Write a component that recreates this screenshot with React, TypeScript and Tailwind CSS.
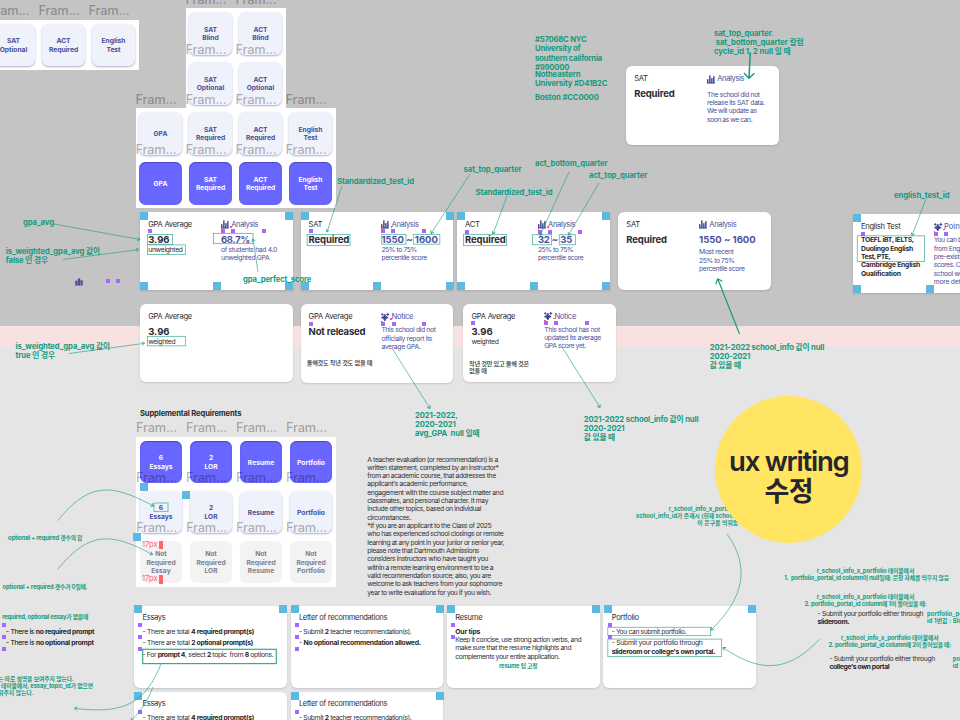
import { Fragment, useLayoutEffect, useRef } from "react";
import type { ReactNode } from "react";

/** Turns **bold** spans of a string into <b> elements. */
function rich(line: string): ReactNode {
  return line.split("**").map((part, i) =>
    i % 2 ? (
      <b key={i} className="font-bold text-[#26262c]">
        {part}
      </b>
    ) : (
      <Fragment key={i}>{part}</Fragment>
    ),
  );
}

/** Lines of text, tracked so that the widest line takes `w` canvas pixels. */
function Fit({ lines, w, className = "" }: { lines: string[]; w?: number; className?: string }) {
  const ref = useRef<HTMLDivElement>(null);
  useLayoutEffect(() => {
    const el = ref.current;
    if (!el || !w) return;
    el.style.letterSpacing = "0px";
    let widest = 0;
    let count = 1;
    el.querySelectorAll<HTMLElement>("[data-line]").forEach((n) => {
      const width = n.getBoundingClientRect().width;
      if (width > widest) {
        widest = width;
        count = (n.textContent || " ").length;
      }
    });
    el.style.letterSpacing = `${(w - widest) / count}px`;
  }, [w, lines]);
  return (
    <div ref={ref} className={`whitespace-pre ${className}`}>
      {lines.map((l, i) => (
        <div key={i}>
          <span data-line="">{rich(l)}</span>
        </div>
      ))}
    </div>
  );
}

/** A node of the canvas. */
function Node({ x, y, className = "", children }: { x: number; y: number; className?: string; children?: ReactNode }) {
  return (
    <div className={`absolute ${className}`} style={{ left: x, top: y }}>
      {children}
    </div>
  );
}

type NoteProps = { x: number; y: number; w?: number; lines: string[] };

/** Green annotation; y is the middle of its first line. */
function Note({ x, y, w, lines }: NoteProps) {
  return (
    <Node x={x} y={y - 4.4}>
      <Fit lines={lines} w={w} className="text-[7.7px] leading-[9.3px] font-bold text-[#149b80]" />
    </Node>
  );
}

function SmallNote({ x, y, w, lines }: NoteProps) {
  return (
    <Node x={x} y={y - 3.5}>
      <Fit lines={lines} w={w} className="text-[5.8px] leading-[7px] font-bold text-[#149b80]" />
    </Node>
  );
}

function Body({ x, y, w, lines }: NoteProps) {
  return (
    <Node x={x} y={y - 3.7}>
      <Fit lines={lines} w={w} className="text-[6.8px] leading-[8.33px] text-[#303036]" />
    </Node>
  );
}

/* ---------- requirement tiles ---------- */

const tileTone = {
  light: "bg-[#f0f2fb] text-[#454d96] shadow-[0_1px_2px_rgba(70,75,150,0.45)]",
  solid: "bg-[#6965ff] text-white shadow-[inset_0_1px_1px_rgba(40,40,140,0.5)]",
  muted: "bg-[#f3f3f3] text-[#7d7e8c]",
};

type TileSpec = { tone: keyof typeof tileTone; lines: string[] };

function Tile({ tone, lines }: TileSpec) {
  return (
    <div className="relative flex h-[50px] w-[50px] items-center justify-center">
      <div
        className={`flex h-[42.6px] w-[42.6px] flex-col items-center justify-center rounded-[6.5px] pt-[1.4px] text-[6.7px] leading-[8.33px] font-bold ${tileTone[tone]}`}
      >
        {lines.map((l) => (
          <span key={l}>{l}</span>
        ))}
      </div>
      <div className="absolute -top-[16.8px] left-0">
        <Fit lines={["Fram..."]} w={41} className="text-[12.8px] leading-[16px] font-medium text-black/30" />
      </div>
    </div>
  );
}

function TilePanel({ cols, tiles }: { cols: string; tiles: TileSpec[] }) {
  return (
    <div className={`grid bg-white ${cols}`}>
      {tiles.map((t, i) => (
        <Tile key={i} {...t} />
      ))}
    </div>
  );
}

/* ---------- icons ---------- */

function Bars() {
  return (
    <svg viewBox="0 0 8 9" className="h-[9px] w-[8px] shrink-0" fill="#454d96">
      <rect x="0" y="4.2" width="1.5" height="4.2" />
      <rect x="2.1" y="0.4" width="1.5" height="8" />
      <rect x="4.1" y="3.2" width="1.5" height="5.2" />
      <rect x="6.1" y="1.2" width="1.5" height="7.2" />
      <rect x="0" y="7.4" width="7.6" height="1" />
    </svg>
  );
}

function Sparkle() {
  return (
    <svg viewBox="0 0 8 9" className="h-[9px] w-[8px] shrink-0 overflow-visible" fill="#3d4592" stroke="#3d4592">
      <path d="M3.8 1.2 Q4.3 4 7.2 4.6 Q4.3 5.2 3.8 8 Q3.3 5.2 0.4 4.6 Q3.3 4 3.8 1.2Z" strokeWidth="0.9" />
      <path d="M1.3 0 Q1.5 1.2 2.6 1.4 Q1.5 1.6 1.3 2.8 Q1.1 1.6 0 1.4 Q1.1 1.2 1.3 0Z" strokeWidth="0.3" />
      <path d="M6.8 -0.2 Q7 1.2 8.4 1.4 Q7 1.6 6.8 3 Q6.6 1.6 5.2 1.4 Q6.6 1.2 6.8 -0.2Z" strokeWidth="0.3" />
    </svg>
  );
}

/* ---------- score cards ---------- */

type Line = { t: string; w?: number; k: keyof typeof lineKind };

const lineKind = {
  title: "h-[10px] text-[7.6px] leading-[10px]",
  value: "mt-[3px] h-[13.2px] text-[9.5px] leading-[14px] font-bold",
  small: "h-[8.33px] text-[6.8px] leading-[8.33px]",
  gap: "h-[4px]",
  hair: "h-[2.4px]",
  bold: "h-[8.33px] text-[6.8px] leading-[8.33px] font-bold",
};

type CardSpec = {
  x: number;
  y: number;
  square?: boolean;
  icon?: "bars" | "sparkle";
  heading?: string;
  headingW?: number;
  spaced?: boolean;
  left: Line[];
  right?: Line[];
};

function Lines({ items }: { items: Line[] }) {
  return (
    <>
      {items.map((l, i) => (
        <Fit key={i} lines={[l.t]} w={l.w} className={lineKind[l.k]} />
      ))}
    </>
  );
}

function ScoreCard({ x, y, square, icon, heading, headingW, left, right }: CardSpec) {
  return (
    <Node
      x={x}
      y={y}
      className={`flex h-[78.5px] w-[152.7px] bg-white pt-[8px] pl-[8px] shadow-[0_1px_2px_rgba(60,60,90,0.18)] ${square ? "rounded-none" : "rounded-[6px]"}`}
    >
      <div className="w-[72.8px] shrink-0 text-[#2b2b31]">
        <Lines items={left} />
      </div>
      {right && (
        <div className="text-[#4a529c]">
          <div className="flex h-[10px] items-center gap-[2.2px]">
            {icon === "sparkle" ? <Sparkle /> : <Bars />}
            <Fit lines={[heading || "Analysis"]} w={headingW || 27} className="text-[7.6px] leading-[10px]" />
          </div>
          <Lines items={right} />
        </div>
      )}
    </Node>
  );
}

const cards: CardSpec[] = [
  {
    x: 140.2, y: 211.8, square: true,
    left: [{ t: "GPA Average", w: 43.8, k: "title" }, { t: "3.96", w: 21.3, k: "value" }, { t: "unweighted", w: 34.5, k: "small" }],
    right: [{ t: "68.7%", w: 28.8, k: "value" }, { t: "of students had 4.0", w: 56, k: "small" }, { t: "unweighted GPA", w: 48.3, k: "small" }],
  },
  {
    x: 300.6, y: 211.8, square: true,
    left: [{ t: "SAT", w: 13.5, k: "title" }, { t: "Required", w: 40.5, k: "value" }],
    right: [{ t: "1550 ~ 1600", w: 56.5, k: "value" }, { t: "25% to 75%", w: 35.3, k: "small" }, { t: "percentile score", w: 45.5, k: "small" }],
  },
  {
    x: 457.1, y: 211.8, square: true,
    left: [{ t: "ACT", w: 14.6, k: "title" }, { t: "Required", w: 40.5, k: "value" }],
    right: [{ t: "32 ~ 35", w: 34.2, k: "value" }, { t: "25% to 75%", w: 35.3, k: "small" }, { t: "percentile score", w: 45.5, k: "small" }],
  },
  {
    x: 618.3, y: 211.8,
    left: [{ t: "SAT", w: 13.5, k: "title" }, { t: "Required", w: 40.5, k: "value" }],
    right: [{ t: "1550 ~ 1600", w: 56.5, k: "value" }, { t: "", k: "hair" }, { t: "Most recent", w: 34.5, k: "small" }, { t: "25% to 75%", w: 35.3, k: "small" }, { t: "percentile score", w: 45.5, k: "small" }],
  },
  {
    x: 626.2, y: 66.2,
    left: [{ t: "SAT", w: 13.5, k: "title" }, { t: "Required", w: 40.5, k: "value" }],
    right: [{ t: "", k: "gap" }, { t: "", k: "hair" }, { t: "The school did not", w: 52.7, k: "small" }, { t: "release its SAT data.", w: 57.5, k: "small" }, { t: "We will update as", w: 49.7, k: "small" }, { t: "soon as we can.", w: 45.2, k: "small" }],
  },
  {
    x: 140.2, y: 303.5,
    left: [{ t: "GPA Average", w: 43.8, k: "title" }, { t: "3.96", w: 21.3, k: "value" }, { t: "weighted", w: 27.2, k: "small" }],
  },
  {
    x: 300.6, y: 304.2, icon: "sparkle", heading: "Notice", headingW: 21.7,
    left: [{ t: "GPA Average", w: 43.8, k: "title" }, { t: "Not released", w: 56.8, k: "value" }],
    right: [{ t: "", k: "gap" }, { t: "This school did not", w: 54.2, k: "small" }, { t: "officially report its", w: 50.7, k: "small" }, { t: "average GPA.", w: 39, k: "small" }],
  },
  {
    x: 463.4, y: 303.5, icon: "sparkle", heading: "Notice", headingW: 21.7,
    left: [{ t: "GPA Average", w: 43.8, k: "title" }, { t: "3.96", w: 21.3, k: "value" }, { t: "weighted", w: 27.2, k: "small" }],
    right: [{ t: "", k: "gap" }, { t: "This school has not", w: 55.7, k: "small" }, { t: "updated its average", w: 56.7, k: "small" }, { t: "GPA score yet.", w: 41.7, k: "small" }],
  },
  {
    x: 853, y: 214.3, square: true, icon: "sparkle", heading: "Pointers", headingW: 29.5,
    left: [
      { t: "English Test", w: 39.3, k: "title" }, { t: "", k: "gap" }, { t: "TOEFL iBT, IELTS,", w: 52.8, k: "bold" }, { t: "Duolingo English", w: 52, k: "bold" },
      { t: "Test, PTE,", w: 29.5, k: "bold" }, { t: "Cambridge English", w: 59, k: "bold" }, { t: "Qualification", w: 39.7, k: "bold" },
    ],
    right: [
      { t: "", k: "gap" }, { t: "You can be exempt", w: 54, k: "small" }, { t: "from English with", w: 49, k: "small" }, { t: "pre-existing SAT", w: 48, k: "small" },
      { t: "scores. Check the", w: 51, k: "small" }, { t: "school website for", w: 52, k: "small" }, { t: "more details.", w: 38, k: "small" },
    ],
  },
];

/* ---------- supplemental cards ---------- */

type Item = { lines: string[]; w: number };

function InfoCard({ title, titleW, children }: { title: string; titleW: number; children: ReactNode }) {
  return (
    <section className="flex h-[82.5px] flex-col rounded-[6px] bg-white pt-[7.7px] pl-[8.2px] text-[#303036] shadow-[0_1px_2px_rgba(60,60,90,0.2)]">
      <Fit lines={[title]} w={titleW} className="mb-[4.4px] h-[10px] text-[7.6px] leading-[10px]" />
      {children}
    </section>
  );
}

function Items({ items }: { items: Item[] }) {
  return (
    <div className="flex flex-col gap-[3.4px]">
      {items.map((it, i) => (
        <Fit key={i} lines={it.lines} w={it.w} className="text-[6.8px] leading-[8.33px]" />
      ))}
    </div>
  );
}

const essayItems: Item[] = [
  { lines: ["- There are total **4 required prompt(s)**"], w: 111.5 },
  { lines: ["- There are total **2 optional prompt(s)**"], w: 110.5 },
  { lines: ["- For **prompt 4**, select **2** topic  from **8** options."], w: 130.7 },
];

const lorItems: Item[] = [
  { lines: ["- Submit **2** teacher recommendation(s)."], w: 112.5 },
  { lines: ["- **No optional recommendation allowed.**"], w: 121.9 },
];

/* ---------- markers ---------- */

const handles: [number, number][] = [
  [140.3, 211.8], [285, 211.8], [140.3, 282.3], [213, 282.3], [285, 282.3],
  [300.7, 211.8], [445.5, 211.8], [300.7, 282.3], [373.2, 282.3], [445.5, 282.3],
  [457.3, 211.8], [602, 211.8], [457.3, 282.3], [529.8, 282.3], [602, 282.3],
  [853, 214.2], [853, 285], [926, 285],
  [139.8, 482.8], [182, 490.8], [132.5, 532.8],
  [134.3, 605.2], [279, 605.2], [290.8, 605.2], [435.5, 605.2], [447.3, 605.2], [591.8, 605.2], [603.8, 605.2], [748.3, 605.2],
  [134.3, 691.7], [290.8, 691.7], [435.5, 691.7],
];

const dots: [number, number][] = [
  [148.2, 229.2], [220.8, 229.2], [231, 229.2], [261.7, 229.2],
  [308.6, 229.2], [381, 229.2], [391.3, 229.2], [421.8, 229.2],
  [465, 229.5], [537.6, 229.5], [547.8, 229.5], [578.2, 229.5],
  [308.6, 321.7], [381, 321.7], [391.5, 321.7], [421.8, 321.7],
  [471.3, 321], [544, 321], [554.3, 321], [584.5, 321],
  [861, 231.8], [933.8, 231.8], [944, 231.8],
  [106, 279.4], [116.3, 279.4],
  [138.3, 623], [138.3, 634.8], [138.3, 646.6], [138.3, 709.5],
  [294.8, 623], [294.8, 634.8], [294.8, 646.6], [294.8, 709.5],
  [451.3, 623], [451.3, 634.8], [607.8, 623], [607.8, 634.8],
  [2, 623], [2, 634.8], [2, 646.6],
];

const specks: [number, number][] = [
  [230, 226], [390.5, 226], [547, 226], [390, 318], [553, 317.5], [943, 228.5],
  [220.8, 227.8], [381, 227.8], [537.5, 228], [380.8, 320.5], [543.8, 320], [933.5, 230.5],
];

/* left, top, right, bottom */
const outlines: number[][] = [
  [147.5, 234.5, 172.5, 244.3], [147.5, 244.9, 185.4, 254.5], [213.4, 233.4, 253, 243.6],
  [307.2, 234.4, 350, 245.6], [381.8, 234.4, 406, 244.2], [413.3, 234.4, 439.8, 244.2],
  [463.5, 234.4, 506.6, 245.6], [532.5, 234.7, 551.6, 244.7], [559.3, 234.7, 575.4, 244.7],
  [147.5, 336.4, 185.4, 345.8], [857.3, 235.8, 924.5, 261.6], [154, 503, 168, 511.6],
  [607.8, 627.3, 710.6, 635.6], [607.8, 639.1, 721.6, 656.6],
];

const connectors = [
  "M54 224 L140 239.5", "M63 259.5 L138.5 249.6", "M69 353.5 L144.5 343.3",
  "M342 186 L327 232", "M470 174 L431 233.5", "M507 196 L493 234", "M569 172 L540 235.5", "M599 183 L568.5 235",
  "M258 272 L253 239", "M392.5 349 L430 408.5", "M562 347 L600 407.5", "M926 199 L912 235.5",
  "M727 534 C750 566 745 597 711 630", "M819.5 639.3 C785 676 756 670 723 647.5",
  "M57.8 520.6 C90 481 112 484 153.5 506", "M57.8 569.2 C90 530 112 533 152.5 554.5",
  "M161 664 C146 701 127 715 74.5 708.3", "M153 687 Q146 706 131 721",
];

const optReq = ["r_school_info_x_portfolio 테이블에서"];

export default function App() {
  return (
    <div className="relative h-[720px] w-[960px] overflow-hidden bg-[#e5e5e5] font-['Inter','Noto_Sans_CJK_KR',sans-serif] [font-optical-sizing:none]">
      <div className="h-[325.7px] bg-[#c4c4c4]" />
      <div className="h-[21.5px] bg-[#f8e1e1]" />

      <Node x={-11.5} y={20}>
        <TilePanel
          cols="grid-cols-[50px_50px_50px]"
          tiles={[
            { tone: "light", lines: ["SAT", "Optional"] }, { tone: "light", lines: ["ACT", "Required"] }, { tone: "light", lines: ["English", "Test"] },
          ]}
        />
      </Node>
      <Node x={135.5} y={8.3} className="flex flex-col items-center">
        <TilePanel
          cols="grid-cols-[50px_50px]"
          tiles={[
            { tone: "light", lines: ["SAT", "Blind"] }, { tone: "light", lines: ["ACT", "Blind"] },
            { tone: "light", lines: ["SAT", "Optional"] }, { tone: "light", lines: ["ACT", "Optional"] },
          ]}
        />
        <TilePanel
          cols="grid-cols-[50px_50px_50px_50px]"
          tiles={[
            { tone: "light", lines: ["GPA"] }, { tone: "light", lines: ["SAT", "Required"] }, { tone: "light", lines: ["ACT", "Required"] }, { tone: "light", lines: ["English", "Test"] },
            { tone: "solid", lines: ["GPA"] }, { tone: "solid", lines: ["SAT", "Required"] }, { tone: "solid", lines: ["ACT", "Required"] }, { tone: "solid", lines: ["English", "Test"] },
          ]}
        />
      </Node>
      <Node x={136} y={408.6} className="flex flex-col gap-[18.4px]">
        <Fit lines={["Supplemental Requirements"]} w={101.3} className="pl-1 text-[7.6px] leading-[10px] font-bold text-[#2b2b31]" />
        <TilePanel
          cols="grid-cols-[50px_50px_50px_50px]"
          tiles={[
            { tone: "solid", lines: ["6", "Essays"] }, { tone: "solid", lines: ["2", "LOR"] }, { tone: "solid", lines: ["Resume"] }, { tone: "solid", lines: ["Portfolio"] },
            { tone: "light", lines: ["6", "Essays"] }, { tone: "light", lines: ["2", "LOR"] }, { tone: "light", lines: ["Resume"] }, { tone: "light", lines: ["Portfolio"] },
            { tone: "muted", lines: ["Not", "Required", "Essay"] }, { tone: "muted", lines: ["Not", "Required", "LOR"] },
            { tone: "muted", lines: ["Not", "Required", "Resume"] }, { tone: "muted", lines: ["Not", "Required", "Portfolio"] },
          ]}
        />
      </Node>
      <Node x={142} y={540.5} className="flex flex-col gap-[26px]">
        {["top", "bottom"].map((side) => (
          <div key={side} className="flex items-center gap-[1.5px]">
            <Fit lines={["17px"]} w={15.5} className="text-[7.6px] leading-[8.6px] text-[#ff6466]" />
            <div className="h-[8.6px] w-[4px] bg-[#ff6466]" />
          </div>
        ))}
      </Node>

      {cards.map((c, i) => (
        <ScoreCard key={i} {...c} />
      ))}
      <Node x={306.7} y={358.5}>
        <Fit lines={["올해것도 작년 것도 없을 때"]} w={65.5} className="text-[6.2px] leading-[7px] font-medium text-[#2b2b31]" />
      </Node>
      <Node x={469} y={359.5}>
        <Fit lines={["작년 것만 있고 올해 것은", "없을 때"]} w={60} className="text-[6.2px] leading-[7px] font-medium text-[#2b2b31]" />
      </Node>

      <Node x={134.3} y={605.5} className="grid grid-cols-[152.8px_152.8px_152.8px_152.8px] gap-x-[3.6px] gap-y-[3.8px]">
        <InfoCard title="Essays" titleW={23}>
          <Items items={essayItems} />
        </InfoCard>
        <InfoCard title="Letter of recommendations" titleW={88.3}>
          <Items items={lorItems} />
        </InfoCard>
        <InfoCard title="Resume" titleW={27}>
          <Fit lines={["**Our tips**"]} w={25} className="text-[6.8px] leading-[8.33px]" />
          <Fit
            lines={["Keep it concise, use strong action verbs, and", "make sure that the resume highlights and", "complements your entire application."]}
            w={126} className="text-[6.8px] leading-[8.33px]"
          />
        </InfoCard>
        <InfoCard title="Portfolio" titleW={27}>
          <Items
            items={[
              { lines: ["- You can submit portfolio."], w: 74.3 },
              { lines: ["- Submit your portfolio through", "**slideroom or college's own portal.**"], w: 103.5 },
            ]}
          />
        </InfoCard>
        <InfoCard title="Essays" titleW={23}>
          <Items items={essayItems} />
        </InfoCard>
        <InfoCard title="Letter of recommendations" titleW={88.3}>
          <Items items={lorItems} />
        </InfoCard>
      </Node>

      <Body
        x={367.3} y={459.2} w={136.7}
        lines={[
          "A teacher evaluation (or recommendation) is a", "written statement, completed by an instructor*", "from an academic course, that addresses the",
          "applicant's academic performance,", "engagement with the course subject matter and", "classmates, and personal character. It may",
          "include other topics, based on individual", "circumstances.", "*If you are an applicant to the Class of 2025",
          "who has experienced school closings or remote", "learning at any point in your junior or senior year,", "please note that Dartmouth Admissions",
          "considers instructors who have taught you", "within a remote learning environment to be a", "valid recommendation source; also, you are",
          "welcome to ask teachers from your sophomore", "year to write evaluations for you if you wish.",
        ]}
      />
      <Node x={6} y={627.6} className="flex flex-col">
        <Items items={[{ lines: ["- There is **no required prompt**"], w: 88.3 }, { lines: ["- There is **no optional prompt**"], w: 87.7 }]} />
      </Node>
      <Body x={817.6} y={613.4} w={105.5} lines={["- Submit your portfolio either through", "**slideroom.**"]} />
      <Body x={829.4} y={658.7} w={105.5} lines={["- Submit your portfolio either through", "**college's own portal**"]} />

      <svg viewBox="0 0 8 8" className="absolute top-[277.5px] left-[74.5px] h-[8px] w-[8px]" fill="#4a509c">
        <rect x="0.2" y="2.8" width="2.3" height="4.8" />
        <rect x="2.8" y="0.4" width="2.4" height="7.2" />
        <rect x="5.5" y="2.2" width="2.2" height="5.4" />
      </svg>

      {handles.map(([x, y], i) => (
        <Node key={i} x={x} y={y} className="h-[8px] w-[8px] bg-[#5bb9e2]" />
      ))}
      {dots.map(([x, y], i) => (
        <Node key={i} x={x} y={y} className="h-[4px] w-[4px] bg-[#a966ff]" />
      ))}
      {specks.map(([x, y], i) => (
        <Node key={i} x={x} y={y} className="h-[1.6px] w-[1.8px] bg-[#ff5a66]" />
      ))}

      <Note x={23} y={222.2} w={31} lines={["gpa_avg"]} />
      <Note x={5.7} y={251} w={94.3} lines={["is_weighted_gpa_avg 값이", "false 인 경우"]} />
      <Note x={15.5} y={346.4} w={94.5} lines={["is_weighted_gpa_avg 값이", "true 인 경우"]} />
      <Note x={243} y={279} w={68.3} lines={["gpa_perfect_score"]} />
      <Note x={337} y={181} w={77} lines={["Standardized_test_id"]} />
      <Note x={463.5} y={169.2} w={58} lines={["sat_top_quarter"]} />
      <Note x={475.5} y={192.6} w={77} lines={["Standardized_test_id"]} />
      <Note x={535} y={163.7} w={72.5} lines={["act_bottom_quarter"]} />
      <Note x={589} y={175} w={58.3} lines={["act_top_quarter"]} />
      <Note x={535} y={39.6} w={67} lines={["#57068C NYC", "University of", "southern california", "#990000"]} />
      <Note x={535} y={74} w={72.3} lines={["Notheastern", "University #D41B2C"]} />
      <Note x={535} y={97} w={63.7} lines={["Boston #CC0000"]} />
      <Note x={714} y={33} w={89.5} lines={["sat_top_quarter.", " sat_bottom_quarter 칼럼", "cycle_id 1, 2 null 일 때"]} />
      <Note x={894} y={195} w={55.5} lines={["english_test_id"]} />
      <Note x={709.7} y={347} w={114.6} lines={["2021-2022 school_info 값이 null", "2020-2021", "값 있을 때"]} />
      <Note x={583.8} y={419} w={114.6} lines={["2021-2022 school_info 값이 null", "2020-2021", "값 있을 때"]} />
      <Note x={415} y={415} w={64.5} lines={["2021-2022,", "2020-2021", "avg_GPA  null 일때"]} />

      <SmallNote x={668.7} y={508.3} w={97.5} lines={optReq} />
      <SmallNote x={636} y={515.2} w={163} lines={["school_info_id가 존재시 (현재 school_info_id가 없을때는 비움)"]} />
      <SmallNote x={697.3} y={522.1} w={41} lines={["이 문구를 띄워줌"]} />
      <SmallNote x={816.7} y={570.6} w={97.5} lines={optReq} />
      <SmallNote x={784.3} y={577.6} w={164.7} lines={["1.  portfolio_portal_id column이 null일때: 문장 자체를 띄우지 않음"]} />
      <SmallNote x={816.7} y={596.6} w={97.5} lines={optReq} />
      <SmallNote x={804.5} y={603.6} w={122} lines={["2. portfolio_portal_id column에 1이 들어있을 때:"]} />
      <SmallNote x={841} y={637.8} w={97.5} lines={optReq} />
      <SmallNote x={828.6} y={644.8} w={122.5} lines={["2. portfolio_portal_id column에 2이 들어있을 때:"]} />
      <SmallNote x={927} y={613.4} w={49} lines={["portfolio_portal_", "id 1번값 : Slide"]} />
      <SmallNote x={952.7} y={658.8} w={49} lines={["portfolio_portal_", "id 2번값"]} />
      <SmallNote x={499} y={665.1} w={38.5} lines={["resume 팁 고정"]} />
      <SmallNote x={8} y={537.2} w={74.3} lines={["optional + required 갯수의 합"]} />
      <SmallNote x={2.6} y={586.2} w={85} lines={["optional + required 갯수가 0일때."]} />
      <SmallNote x={2.2} y={616.2} w={86} lines={["required, optional essay가 없을때"]} />
      <SmallNote x={-2} y={678.6} w={76} lines={["는 따로 설명을 보여주지 않는다."]} />
      <SmallNote x={1} y={685.6} w={92} lines={["테이블에서, essay_topic_id가 없으면"]} />
      <SmallNote x={-2} y={692.4} w={36} lines={["워주지 않는다."]} />

      <svg viewBox="0 0 960 720" className="absolute inset-0 h-[720px] w-[960px]" fill="none" stroke="#149b80">
        <defs>
          <marker id="tip" viewBox="0 0 6 6" refX="5" refY="3" markerWidth="4.4" markerHeight="4.4" markerUnits="userSpaceOnUse" orient="auto">
            <path d="M1.5 0.5 L5 3 L1.5 5.5" fill="none" stroke="#149b80" strokeWidth="1" />
          </marker>
        </defs>
        {outlines.map(([l, t, r, b], i) => (
          <rect key={i} x={l} y={t} width={r - l} height={b - t} strokeWidth="0.9" strokeOpacity="0.65" />
        ))}
        <rect x="142.7" y="649.3" width="133.6" height="14.3" strokeWidth="1.2" strokeOpacity="0.85" />
        {connectors.map((d, i) => (
          <path key={i} d={d} strokeWidth="0.8" strokeOpacity="0.75" markerEnd="url(#tip)" />
        ))}
        <path d="M739.5 334 L718 279.5 M715.8 284 L717.7 278.8 L722.3 281.3" strokeWidth="1.2" />
        <path d="M750.3 52.5 L749 78 M744 73 L749 78.3 L754.4 73.2" strokeWidth="1.5" />
      </svg>

      <Node x={715.2} y={396} className="flex h-[147.2px] w-[147.2px] flex-col items-center rounded-full bg-[#ffe562] pt-[48.5px] text-[#26262c]">
        <Fit lines={["ux writing"]} w={119.5} className="h-[31px] text-[27.5px] leading-[32px] font-semibold" />
        <Fit lines={["수정"]} w={48.5} className="h-[31px] text-[27px] leading-[31px] font-semibold" />
      </Node>
    </div>
  );
}
